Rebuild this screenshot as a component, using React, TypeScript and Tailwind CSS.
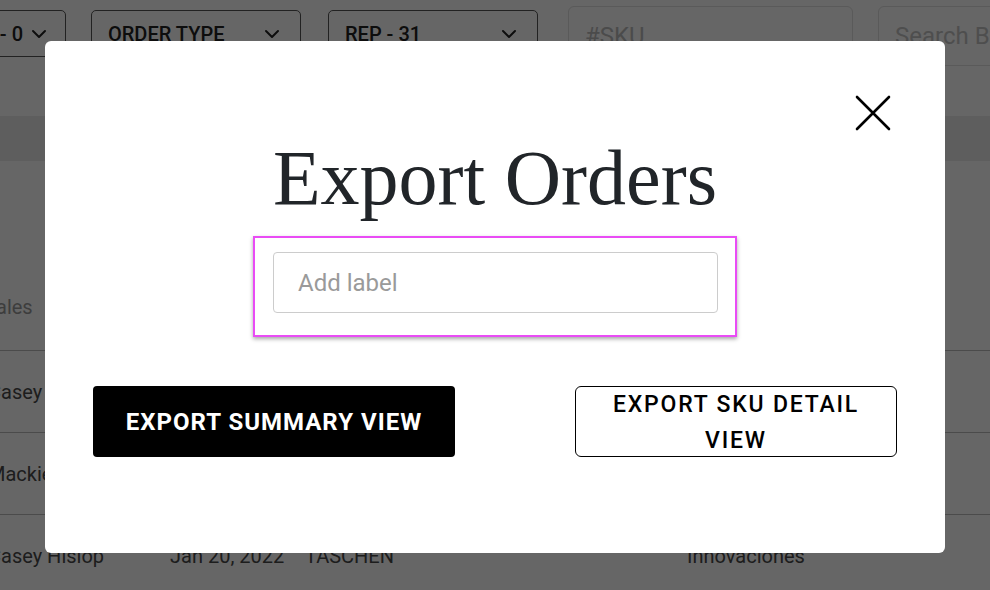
import { ChevronDown } from "lucide-react";

const Dropdown = ({ label, className = "" }: { label: string; className?: string }) => (
  <div
    className={`h-[47px] shrink-0 flex flex-row items-center justify-between rounded-[5px] border border-[#555] px-4 text-[20px] font-medium text-[#222] ${className}`}
  >
    <span className="leading-none">{label}</span>
    <ChevronDown className="w-6 h-6 text-[#222]" strokeWidth={2} />
  </div>
);

const Row = ({ name, date, publisher, extra }: { name: string; date?: string; publisher?: string; extra?: string }) => (
  <div className="h-[82px] flex flex-row items-center border-t border-[#bbb] text-[20px] text-[#4a4a4a]">
    <span className="w-[182px] -ml-[12px] shrink-0">{name}</span>
    <span className="w-[135px] shrink-0">{date}</span>
    <span className="w-[382px] shrink-0">{publisher}</span>
    <span>{extra}</span>
  </div>
);

export default function App() {
  return (
    <div className="relative w-[990px] h-[590px] overflow-hidden bg-white font-['Roboto',sans-serif]">
      {/* page behind the dialog */}
      <div className="flex flex-row items-start gap-[25px] pt-[10px] -ml-[90px]">
        <Dropdown label="- 0" className="w-[156px] justify-end gap-[4px] pr-[14px]" />
        <Dropdown label="ORDER TYPE" className="w-[210px]" />
        <Dropdown label="REP - 31" className="w-[210px] ml-[2px]" />
        <div className="-mt-[4px] ml-[5px] h-[60px] w-[285px] shrink-0 rounded-[6px] border border-[#e0e0e0] px-4 flex items-center text-[24px] text-[#bbb]">
          #SKU
        </div>
        <div className="-mt-[4px] h-[60px] w-[200px] shrink-0 rounded-[6px] border border-[#e0e0e0] px-4 flex items-center text-[24px] text-[#c4c4c4] whitespace-nowrap">
          Search By
        </div>
      </div>
      <div className="mt-[50px] h-[45px] bg-[#ececec]" />
      <div className="h-[189px] flex items-end pb-[28px] -ml-[4px] text-[20px] text-[#9a9a9a]">ales</div>
      <div>
        <Row name="Casey" />
        <Row name="Mackie" />
        <Row name="Casey Hislop" date="Jan 20, 2022" publisher="TASCHEN" extra="Innovaciones" />
      </div>

      {/* dim overlay */}
      <div className="absolute inset-0 bg-black/60" />

      {/* dialog */}
      <div className="absolute inset-0 flex items-center justify-center pt-[4px]">
        <div className="relative w-[900px] h-[512px] rounded-[6px] bg-white flex flex-col items-center pt-[92px]">
          <button className="absolute top-[54px] right-[54px] w-9 h-9 flex items-center justify-center">
            <svg width="36" height="36" viewBox="0 0 36 36" fill="none">
              <path d="M2 2L34 34M34 2L2 34" stroke="#000" strokeWidth="2.6" strokeLinecap="round" />
            </svg>
          </button>
          <h2 className="font-['Liberation_Serif',serif] text-[78px] leading-[90px] text-[#212529]">
            Export Orders
          </h2>
          <div className="mt-[13px] w-[484px] h-[101px] border-2 border-[#e94cf5] shadow-[0_2px_4px_rgba(0,0,0,0.35)] pt-[14px] pl-[18px] pr-[17px]">
            <input
              className="w-full h-[61px] rounded-[4px] border border-[#ccc] px-6 text-[24px] text-[#333] placeholder:text-[#9a9a9a] outline-none"
              placeholder="Add label"
            />
          </div>
          <div className="mt-[49px] w-full px-[48px] flex flex-row items-start justify-between">
            <button className="w-[362px] h-[71px] rounded-[4px] bg-black text-white text-[24px] font-bold tracking-[1px] leading-none">
              EXPORT SUMMARY VIEW
            </button>
            <button className="w-[322px] h-[71px] rounded-[6px] border border-black bg-white text-black text-[23px] font-medium tracking-[1.8px] leading-[36px] px-6">
              EXPORT SKU DETAIL VIEW
            </button>
          </div>
        </div>
      </div>
    </div>
  );
}
